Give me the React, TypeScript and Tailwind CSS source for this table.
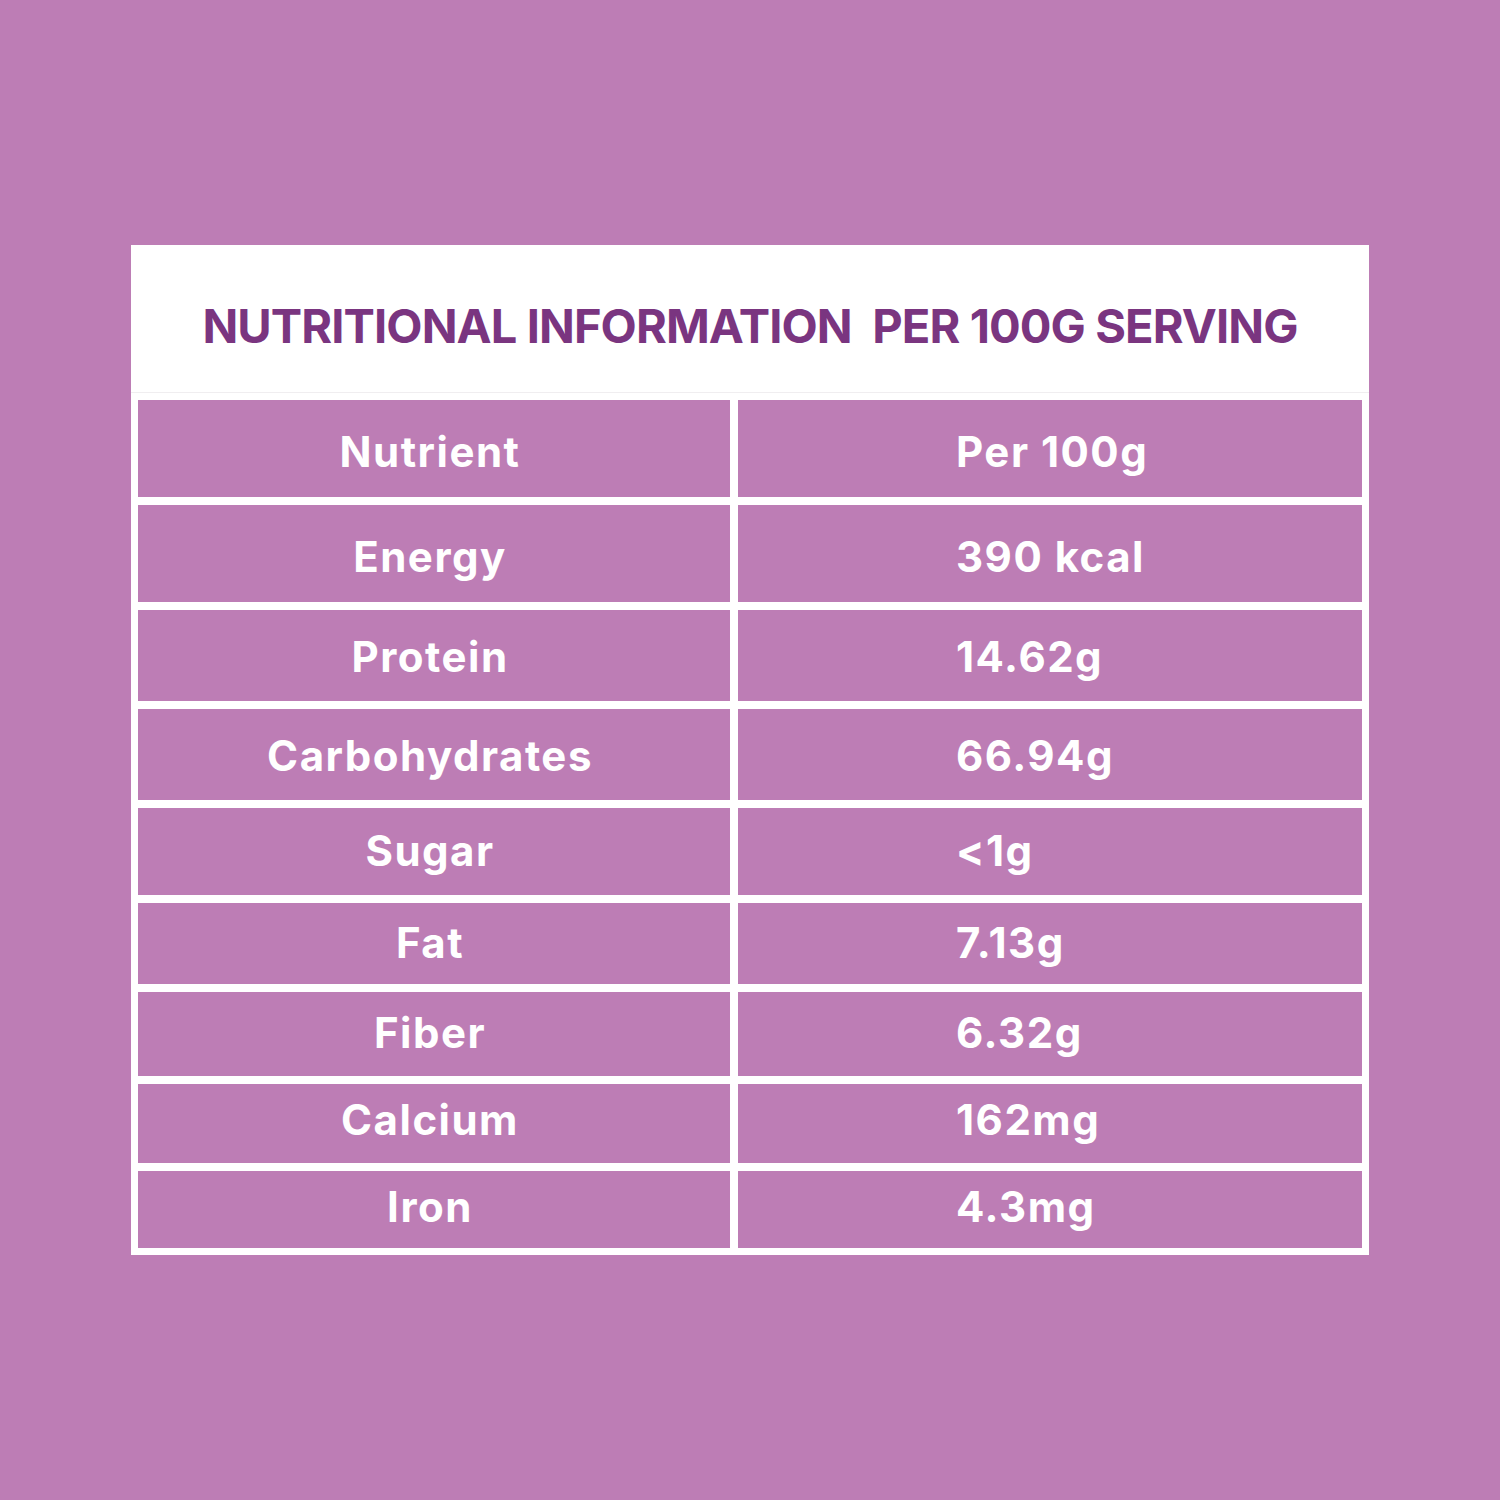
import React from "react";

type R = { name: string; value: string; h: string; pad: string };

const rows: R[] = [
  { name: "Nutrient", value: "Per 100g", h: "h-[97px]", pad: "pt-[7px]" },
  { name: "Energy", value: "390 kcal", h: "h-[97px]", pad: "pt-[6px]" },
  { name: "Protein", value: "14.62g", h: "h-[91px]", pad: "pt-[3px]" },
  { name: "Carbohydrates", value: "66.94g", h: "h-[91px]", pad: "pt-[2px]" },
  { name: "Sugar", value: "<1g", h: "h-[87px]", pad: "pb-[2px]" },
  { name: "Fat", value: "7.13g", h: "h-[81px]", pad: "pb-[2px]" },
  { name: "Fiber", value: "6.32g", h: "h-[84px]", pad: "pb-[2px]" },
  { name: "Calcium", value: "162mg", h: "h-[79px]", pad: "pb-[8px]" },
  { name: "Iron", value: "4.3mg", h: "h-[77px]", pad: "pb-[5px]" },
];

function Row({ name, value, h, pad }: R) {
  return (
    <div className={`grid grid-cols-[592px_624px] gap-[8px] ${h}`}>
      <div className={`flex items-center justify-center bg-[#bd7db5] pr-[8px] ${pad}`}>
        <span className="text-[42px] font-bold tracking-[1.5px] text-white leading-none">{name}</span>
      </div>
      <div className={`flex items-center bg-[#bd7db5] pl-[218px] ${pad}`}>
        <span className="text-[42px] font-bold tracking-[1.5px] text-white leading-none">{value}</span>
      </div>
    </div>
  );
}

export default function App() {
  return (
    <div
      className="flex h-[1500px] w-[1500px] items-center justify-center bg-[#bd7db5]"
      style={{ fontFamily: "Inter, 'Noto Sans', sans-serif" }}
    >
      <div className="flex h-[1010px] w-[1238px] flex-col bg-white">
        <div className="flex h-[148px] items-center justify-center border-b border-[#f0eef0] pt-[13px]">
          <h1 className="whitespace-pre text-[47px] font-bold leading-none tracking-[-0.9px] text-[#7a3580]">
            NUTRITIONAL INFORMATION  PER 100G SERVING
          </h1>
        </div>
        <div className="flex flex-col gap-[8px] px-[7px] pt-[7px]">
          {rows.map((r) => (
            <Row key={r.name} {...r} />
          ))}
        </div>
      </div>
    </div>
  );
}
